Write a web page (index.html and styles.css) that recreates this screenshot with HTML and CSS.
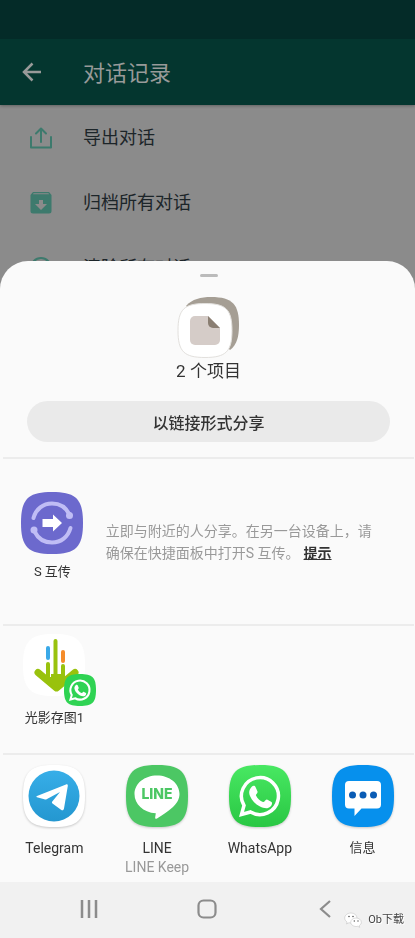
FILE: index.html
```html
<!DOCTYPE html>
<html lang="zh-CN">

<head>
    <meta charset="UTF-8" />
    <meta name="viewport" content="width=device-width, initial-scale=1.0" />
    <title>对话记录</title>
    <link rel="stylesheet" href="styles.css">
</head>

<body>
    <div class="page">
        <header class="app-bar">
            <button type="button" class="back-btn" aria-label="返回">
                <svg width="20" height="20" viewBox="0 0 20 20" fill="none" stroke="currentColor" stroke-width="2.500">
                    <path d="M19 10H2M10.500 1.500L2 10l8.500 8.500" />
                </svg>
            </button>
            <h1>对话记录</h1>
        </header>
        <nav class="menu">
            <a href="#" class="menu-item">
                <svg width="24" height="24" viewBox="0 0 24 24" fill="none" stroke="currentColor" stroke-width="2" stroke-linecap="round" stroke-linejoin="round">
                    <path d="M2 11v10.5h20V11M12 16V3M7 7.5l5-5 5 5" />
                </svg>
                <span>导出对话</span>
            </a>
            <a href="#" class="menu-item">
                <svg width="24" height="24" viewBox="0 0 24 24">
                    <path fill="currentColor" fill-rule="evenodd" d="M4 1h16l2.500 3v16a2.500 2.500 0 0 1-2.500 2.500H4A2.500 2.500 0 0 1 1.500 20V4zM4.500 2.300L4 3.300h16l-.500-1zM10 9v4H6l6 6 6-6h-4V9z" />
                </svg>
                <span>归档所有对话</span>
            </a>
            <a href="#" class="menu-item">
                <svg width="24" height="24" viewBox="0 0 24 24" fill="none" stroke="currentColor" stroke-width="2">
                    <circle cx="12" cy="12" r="10" />
                    <path d="M6 12h12" />
                </svg>
                <span>清除所有对话</span>
            </a>
        </nav>
    </div>

    <div class="overlay">
        <main class="sheet">
            <div class="handle"></div>
            <section class="summary">
                <svg width="64" height="64" viewBox="0 0 64 64">
                    <path fill="#a59e94" d="M9 11C15 4 24 2 34 2c22 0 28 8 28 28 0 11-2 20-9 25z" />
                    <path fill="#fff" stroke="#e2e0dd" stroke-width="1" d="M28 8.500c21 0 27 6 27 27s-6 27-27 27-27-6-27-27 6-27 27-27z" />
                    <path fill="#d5ccc8" d="M18 21h13l12 12v12a5 5 0 0 1-5 5H18a5 5 0 0 1-5-5V26a5 5 0 0 1 5-5z" />
                    <path fill="#8a7e72" d="M31 21l12 12h-7a5 5 0 0 1-5-5z" />
                </svg>
                <p>2 个项目</p>
                <button type="button" class="link-btn">以链接形式分享</button>
            </section>

            <section class="nearby">
                <button type="button" class="target">
                    <svg class="target-icon" viewBox="0 0 62 62">
                        <path fill="#6c69cd" d="M31 0c24 0 31 7 31 31s-7 31-31 31S0 55 0 31 7 0 31 0z" />
                        <g fill="none" stroke="#c0bdf5" stroke-width="4" stroke-linecap="round">
                            <path d="M12.500 26C15 17 22 11.500 31 11.500c8 0 14 4 17.500 11" />
                            <path d="M49.500 36C47 45 40 50.500 31 50.500c-8 0-14-4-17.500-11" />
                        </g>
                        <circle cx="48.500" cy="23.500" r="3.500" fill="#c0bdf5" />
                        <circle cx="13" cy="38" r="3.500" fill="#c0bdf5" />
                        <path fill="#fff" d="M21.500 27H32v-4.500l9 8.500-9 8.500V35H21.500z" />
                    </svg>
                    <span>S 互传</span>
                </button>
                <p>立即与附近的人分享。在另一台设备上，请确保在快捷面板中打开S 互传。<a href="#">提示</a></p>
            </section>

            <section class="contacts">
                <button type="button" class="target">
                    <span class="avatar">
                        <svg class="target-icon" viewBox="0 0 62 62">
                            <path fill="#fff" d="M31 0c24 0 31 7 31 31s-7 31-31 31S0 55 0 31 7 0 31 0z" />
                            <g fill="none" stroke-width="4" stroke-linecap="round">
                                <path stroke="#99c20d" d="M32.500 7v42M25 30v16M40 32v14" />
                            </g>
                            <path fill="none" stroke="#99c20d" stroke-width="7" stroke-linecap="round" stroke-linejoin="round" d="M15 38.500L33.500 54 52 38.500" />
                            <path fill="#99c20d" d="M19 41l4 2h5v-3h3v3h3v-3h4v3h4l5-1-4 5-9 7-10-7z" />
                            <path fill="none" stroke="#3aa9e8" stroke-width="4" stroke-linecap="round" d="M25 14v10" />
                            <path fill="none" stroke="#f58c2a" stroke-width="4" stroke-linecap="round" d="M40 18v9" />
                        </svg>
                        <svg class="badge" viewBox="0 0 62 62">
                            <path fill="#2fd353" d="M31 0c24 0 31 7 31 31s-7 31-31 31S0 55 0 31 7 0 31 0z" />
                            <path fill="none" stroke="#fff" stroke-width="4" d="M12.500 49.500l2.500-9A18.500 18.500 0 1 1 21.500 47z" />
                            <path fill="#fff" d="M23 21.500c1-1 3-1 3.500.5l2 4.500c.5 1.500-2 3-1.500 4 1.500 3 4 5.500 7 6.500 1.500.5 2.500-3 4-2.500l4.500 2.500c1 .5.500 3-1 4.500-3 3-7 1.500-10.500 0-5-2.500-8-6-10-10.500-1.500-3.500-1-6.500 2-9.500z" />
                        </svg>
                    </span>
                    <span>光影存图1</span>
                </button>
            </section>

            <section class="apps">
                <button type="button" class="target">
                    <svg class="target-icon shadow" viewBox="0 0 62 62">
                        <defs>
                            <linearGradient id="blue" x2="0" y2="1">
                                <stop stop-color="#37aee8" />
                                <stop offset="1" stop-color="#2497d0" />
                            </linearGradient>
                        </defs>
                        <path fill="#fff" d="M31 0c24 0 31 7 31 31s-7 31-31 31S0 55 0 31 7 0 31 0z" />
                        <circle cx="31" cy="31" r="25.500" fill="url(#blue)" />
                        <path fill="#fff" d="M14 31L43 19.500c1.200-.500 2 .300 1.800 1.500L41 43.500c-.400 2-1.600 2.200-3 1.200l-8.500-6.200c-.800-.600-.700-1.500 0-2.200L37 27 24 34c-1 .600-1.700.600-2.700.300L14 32.300c-.800-.300-.800-1 0-1.300z" />
                    </svg>
                    <span>Telegram</span>
                </button>
                <button type="button" class="target">
                    <svg class="target-icon shadow" viewBox="0 0 62 62">
                        <path fill="#4cc764" d="M31 0c24 0 31 7 31 31s-7 31-31 31S0 55 0 31 7 0 31 0z" />
                        <path fill="#fff" d="M31 10.500c12.500 0 22.500 8 22.500 18.500 0 5-2.500 9-6.500 13-5 4.500-11 8.500-16 11.500-1.500.8-2 0-1.800-1.200l.6-4C17 47.500 8.500 39 8.500 29c0-10.500 10-18.500 22.500-18.500z" />
                        <text x="31" y="34" class="line-logo">LINE</text>
                    </svg>
                    <span>LINE</span>
                    <small>LINE Keep</small>
                </button>
                <button type="button" class="target">
                    <svg class="target-icon shadow" viewBox="0 0 62 62">
                        <defs>
                            <linearGradient id="green" x2="0" y2="1">
                                <stop stop-color="#48e862" />
                                <stop offset="1" stop-color="#29c743" />
                            </linearGradient>
                        </defs>
                        <path fill="url(#green)" d="M31 0c24 0 31 7 31 31s-7 31-31 31S0 55 0 31 7 0 31 0z" />
                        <path fill="none" stroke="#fff" stroke-width="3.500" d="M12.500 49.500l2.500-9A18.500 18.500 0 1 1 21.500 47z" />
                        <path fill="#fff" d="M23 21.500c1-1 3-1 3.500.5l2 4.500c.5 1.500-2 3-1.500 4 1.500 3 4 5.500 7 6.500 1.500.5 2.500-3 4-2.500l4.500 2.500c1 .5.500 3-1 4.500-3 3-7 1.500-10.500 0-5-2.500-8-6-10-10.500-1.500-3.500-1-6.500 2-9.500z" />
                    </svg>
                    <span>WhatsApp</span>
                </button>
                <button type="button" class="target">
                    <svg class="target-icon shadow" viewBox="0 0 62 62">
                        <path fill="#0690ed" d="M31 0c24 0 31 7 31 31s-7 31-31 31S0 55 0 31 7 0 31 0z" />
                        <path fill="#fff" d="M17 16h28a4 4 0 0 1 4 4v19.500a4 4 0 0 1-4 4H29.500l-7 7.500v-7.500H17a4 4 0 0 1-4-4V20a4 4 0 0 1 4-4z" />
                        <g fill="#0a5cb5">
                            <circle cx="20.500" cy="30" r="3.500" />
                            <circle cx="31" cy="30" r="3.500" />
                            <circle cx="41.500" cy="30" r="3.500" />
                        </g>
                    </svg>
                    <span class="cjk">信息</span>
                </button>
            </section>
        </main>

        <footer class="nav-bar">
            <button type="button" aria-label="最近">
                <svg width="20" height="20" viewBox="0 0 20 20" fill="none" stroke="currentColor" stroke-width="2.500">
                    <path d="M3 1v18M10 1v18M17 1v18" />
                </svg>
            </button>
            <button type="button" aria-label="主页">
                <svg width="20" height="20" viewBox="0 0 20 20" fill="none" stroke="currentColor" stroke-width="2.200">
                    <rect x="1.500" y="1.500" width="17" height="17" rx="5" />
                </svg>
            </button>
            <button type="button" aria-label="返回">
                <svg width="20" height="20" viewBox="0 0 20 20" fill="none" stroke="currentColor" stroke-width="2.200">
                    <path d="M15 2l-9 8 9 8" />
                </svg>
            </button>
            <div class="watermark">
                <svg width="18" height="16" viewBox="0 0 18 16">
                    <g fill="#fff" stroke="#bbb" stroke-width=".5">
                        <path d="M7 1c3.500 0 6 2.300 6 5s-2.500 5-6 5l-2-.3L2.500 12l.6-2C1.500 9 .7 7.500.7 6c0-2.700 2.800-5 6.300-5z" />
                        <path d="M12 6c3 0 5.300 1.900 5.300 4.200 0 1.400-.800 2.600-2 3.400l.4 1.700-2-1c-.500.200-1.100.2-1.700.2-3 0-5.300-2-5.300-4.300S9 6 12 6z" />
                    </g>
                    <g fill="#555">
                        <circle cx="5" cy="4.500" r=".8" />
                        <circle cx="9" cy="4.500" r=".8" />
                        <circle cx="10.300" cy="9" r=".7" />
                        <circle cx="14" cy="9" r=".7" />
                    </g>
                </svg>
                <span>Ob下载</span>
            </div>
        </footer>
    </div>
</body>

</html>
```
FILE: styles.css
```css
* {
    box-sizing: border-box;
}

body {
    margin: 0;
    font-family: Roboto, "Noto Sans CJK SC", sans-serif;
    color: #333;
    background-color: #8b8b8b;
}

h1,
p {
    margin: 0;
    font-weight: normal;
}

button {
    padding: 0;
    border: none;
    background: none;
    color: inherit;
    font: inherit;
    cursor: pointer;
}

svg {
    display: block;
    flex-shrink: 0;
}

.page {
    height: 100vh;
    overflow: hidden;
}

/* dimmed chat history screen */
.app-bar {
    display: flex;
    align-items: center;
    gap: 41px;
    height: 105px;
    padding: 39px 22px 0;
    background: linear-gradient(#042b28 39px, #04362f 39px);
    box-shadow: 0 1px 3px rgba(0, 0, 0, 0.3);
    color: #989a99;
}

.app-bar h1 {
    padding-bottom: 2px;
    font-size: 22px;
}

.menu-item {
    display: flex;
    align-items: center;
    gap: 30px;
    height: 65px;
    padding: 0 29px;
    color: #1c2529;
    font-size: 18px;
    text-decoration: none;
}

.menu-item svg {
    color: #3d7a6d;
}

.menu-item span {
    padding-bottom: 3px;
}

/* share sheet and system bar */
.overlay {
    position: fixed;
    right: 0;
    bottom: 0;
    left: 0;
}

.sheet {
    padding: 13px 1px 0 3px;
    border-radius: 28px 28px 0 0;
    background-color: #fafafa;
}

.handle {
    width: 18px;
    height: 3px;
    margin: 0 auto 18px;
    border-radius: 2px;
    background-color: #bbb;
}

.summary {
    display: flex;
    flex-direction: column;
    align-items: center;
    padding: 0 24px 15px;
}

.summary p {
    margin-bottom: 18px;
    font-size: 17px;
    line-height: 24px;
}

.link-btn {
    width: 100%;
    height: 41px;
    border-radius: 21px;
    background-color: #eaeaea;
    font-size: 16px;
    font-weight: 500;
}

.nearby,
.contacts,
.apps {
    border-top: 2px solid #ececec;
}

.nearby,
.contacts {
    display: grid;
    grid-template-columns: 1fr 3fr;
}

.nearby {
    height: 167px;
    padding-top: 33px;
}

.nearby .target {
    margin-right: 4px;
}

.nearby p {
    padding: 28px 32px 0 0;
    color: #999;
    font-size: 14px;
    line-height: 22px;
}

.nearby a {
    margin-left: 4px;
    color: #333;
    font-weight: bold;
}

.contacts {
    height: 129px;
    padding-top: 8px;
}

.apps {
    display: grid;
    grid-template-columns: repeat(4, 1fr);
    height: 129px;
    padding-top: 10px;
}

.target {
    display: flex;
    flex-direction: column;
    align-items: center;
    align-self: start;
    gap: 8px;
    font-size: 13px;
    line-height: 20px;
}

.contacts .target {
    gap: 12px;
}

.apps .target {
    gap: 0;
    font-size: 14px;
}

.apps .cjk {
    font-size: 13px;
}

.apps .target-icon {
    margin-bottom: 11px;
}

.target small {
    color: #999;
    font-size: 14px;
    line-height: 18px;
}

.target-icon {
    width: 62px;
    height: 62px;
}

.shadow {
    overflow: visible;
    filter: drop-shadow(0 1px 1px rgba(0, 0, 0, 0.2));
}

.avatar {
    position: relative;
}

.badge {
    position: absolute;
    right: -11px;
    bottom: -10px;
    width: 32px;
    height: 32px;
}

.line-logo {
    fill: #4cc764;
    font-family: Inter, sans-serif;
    font-size: 14px;
    font-weight: 800;
    text-anchor: middle;
}

.nav-bar {
    position: relative;
    display: flex;
    justify-content: center;
    gap: 98px;
    height: 56px;
    padding: 17px 2px 19px 0;
    background-color: #f1f1f1;
    color: #8c8c8c;
}

.watermark {
    position: absolute;
    right: 11px;
    bottom: 9px;
    display: flex;
    align-items: center;
    gap: 6px;
    color: #444;
    font-size: 11px;
    line-height: 18px;
    text-shadow: 1px 1px #fff;
}
```
